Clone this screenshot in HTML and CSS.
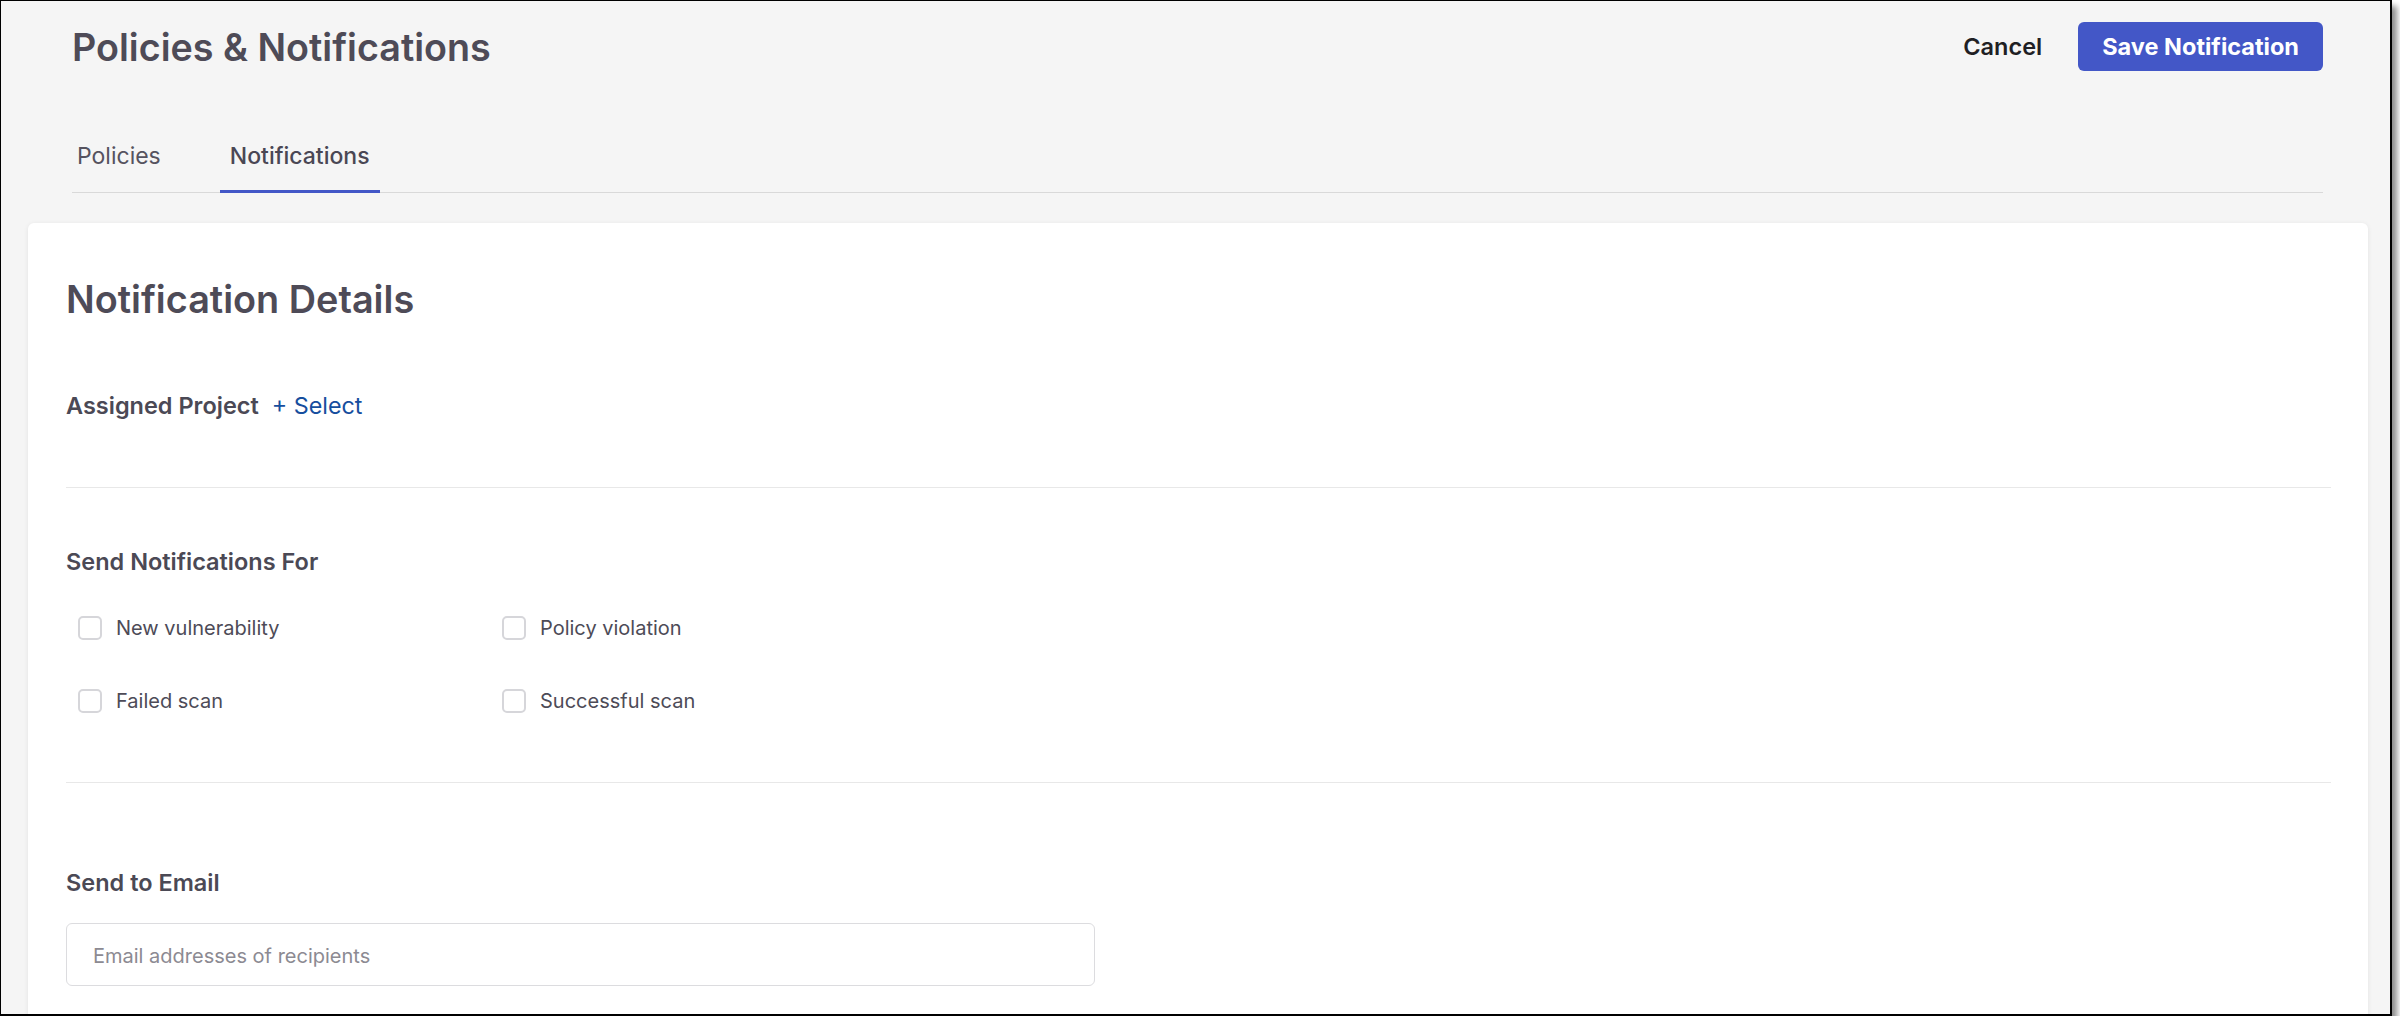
FILE: index.html
```
<!DOCTYPE html>
<html lang="en">
<head>
    <meta charset="UTF-8">
    <meta name="viewport" content="width=device-width, initial-scale=1.0">
    <title>Policies &amp; Notifications</title>
    <link rel="stylesheet" href="styles.css">
</head>
<body>
    <div class="frame">
        <header class="page-header">
            <div class="header-row">
                <h1 class="page-title">Policies &amp; Notifications</h1>
                <div class="header-actions">
                    <button class="btn-link">Cancel</button>
                    <button class="btn-primary">Save Notification</button>
                </div>
            </div>

            <nav class="tabs">
                <a class="tab">Policies</a>
                <a class="tab active">Notifications</a>
            </nav>
        </header>

        <main class="card">
            <h2 class="card-title">Notification Details</h2>

            <section class="section">
                <div class="field-row">
                    <span class="field-label">Assigned Project</span>
                    <a class="select-link">+ Select</a>
                </div>
            </section>

            <section class="section events">
                <div class="field-label">Send Notifications For</div>
                <div class="check-grid">
                    <label class="check"><input type="checkbox"> New vulnerability</label>
                    <label class="check"><input type="checkbox"> Policy violation</label>
                    <label class="check"><input type="checkbox"> Failed scan</label>
                    <label class="check"><input type="checkbox"> Successful scan</label>
                </div>
            </section>

            <section class="section last">
                <div class="field-label email-label">Send to Email</div>
                <input class="email-input" type="text" placeholder="Email addresses of recipients">
            </section>
        </main>
    </div>
</body>
</html>
```

FILE: styles.css
```
body {
    margin: 0;
    background: #ffffff;
    font-family: Inter, "Noto Sans", sans-serif;
}

.frame {
    box-sizing: border-box;
    width: 2392px;
    height: 1016px;
    background: #f5f5f5;
    border: 1px solid #000;
    border-right-width: 2px;
    border-bottom-width: 2px;
    box-shadow: 5px 6px 6px rgba(0, 0, 0, 0.45);
    overflow: hidden;
}

.page-header {
    padding: 21px 67px 0 71px;
}

.header-row {
    display: flex;
    align-items: center;
    justify-content: space-between;
    height: 49px;
}

.page-title {
    margin: 0;
    font-size: 37.7px;
    font-weight: 600;
    color: #4e4b57;
}

.header-actions {
    display: flex;
    align-items: center;
    gap: 24px;
}

.btn-link {
    background: none;
    border: none;
    font-family: inherit;
    font-size: 23.5px;
    font-weight: 600;
    color: #1f1f24;
    padding: 0 12px;
}

.btn-primary {
    height: 49px;
    padding: 0 24px;
    background-color: #4357c7;
    color: white;
    border: none;
    border-radius: 6px;
    font-family: inherit;
    font-size: 23.5px;
    font-weight: 700;
}

.tabs {
    display: flex;
    margin-top: 71px;
    border-bottom: 1px solid #d9d9d9;
}

.tab {
    margin-left: -5px;
    margin-right: 54px;
    padding: 0 10px 20px;
    font-size: 23px;
    line-height: 28px;
    color: #56535f;
    border-bottom: 3px solid transparent;
    margin-bottom: -1px;
}

.tab.active {
    font-weight: 500;
    color: #4a4754;
    border-bottom-color: #4357c7;
}

.card {
    margin: 30px 22px 0 27px;
    padding: 54px 37px 60px 38px;
    background: #ffffff;
    border-radius: 6px;
    box-shadow: 0 1px 5px rgba(0, 0, 0, 0.08);
}

.card-title {
    margin: 0;
    font-size: 37.8px;
    line-height: 44px;
    font-weight: 600;
    color: #4e4b57;
}

.section {
    border-bottom: 1px solid #e8e8e8;
    padding-bottom: 66px;
}

.section:first-of-type {
    padding-top: 70px;
}

.section + .section {
    padding-top: 59px;
}

.section.events {
    padding-bottom: 68px;
}

.section.last {
    border-bottom: none;
    padding-top: 85px;
}

.field-row {
    display: flex;
    align-items: center;
    gap: 13px;
}

.field-label {
    font-size: 23.5px;
    line-height: 30px;
    font-weight: 600;
    color: #4b4955;
}

.select-link {
    font-size: 23.3px;
    line-height: 30px;
    color: #164e9e;
    cursor: pointer;
}

.check-grid {
    display: grid;
    grid-template-columns: 424px 424px;
    row-gap: 47px;
    margin-top: 38px;
    padding-left: 12px;
}

.check {
    display: flex;
    align-items: center;
    gap: 14px;
    height: 26px;
    font-size: 20px;
    color: #4d4b57;
}

.check input {
    appearance: none;
    margin: 0;
    width: 24px;
    height: 24px;
    border: 2px solid #d6d6da;
    border-radius: 5px;
    background: white;
}

.email-input {
    box-sizing: border-box;
    display: block;
    margin-top: 25px;
    width: 1029px;
    height: 63px;
    padding: 3px 26px 0;
    border: 1px solid #dcdcdf;
    border-radius: 6px;
    font-family: inherit;
    font-size: 20px;
    color: #333;
}

.email-input::placeholder {
    color: #8c8a92;
}
```
